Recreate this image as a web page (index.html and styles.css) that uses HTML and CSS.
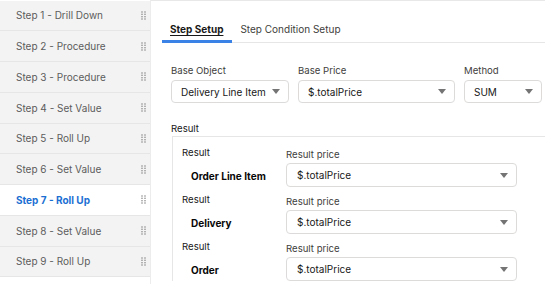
FILE: index.html
```html
<!DOCTYPE html>
<html>
<head>
<meta charset="utf-8">
<link rel="stylesheet" href="styles.css">
</head>
<body>
<div class="app">
  <aside class="sidebar">
    <div class="step"><span>Step 1 - Drill Down</span><svg class="grip" viewBox="0 0 5 9"><circle cx="1" cy="1" r="0.8"/><circle cx="4" cy="1" r="0.8"/><circle cx="1" cy="3.3" r="0.8"/><circle cx="4" cy="3.3" r="0.8"/><circle cx="1" cy="5.7" r="0.8"/><circle cx="4" cy="5.7" r="0.8"/><circle cx="1" cy="8" r="0.8"/><circle cx="4" cy="8" r="0.8"/></svg></div>
    <div class="step"><span>Step 2 - Procedure</span><svg class="grip" viewBox="0 0 5 9"><circle cx="1" cy="1" r="0.8"/><circle cx="4" cy="1" r="0.8"/><circle cx="1" cy="3.3" r="0.8"/><circle cx="4" cy="3.3" r="0.8"/><circle cx="1" cy="5.7" r="0.8"/><circle cx="4" cy="5.7" r="0.8"/><circle cx="1" cy="8" r="0.8"/><circle cx="4" cy="8" r="0.8"/></svg></div>
    <div class="step"><span>Step 3 - Procedure</span><svg class="grip" viewBox="0 0 5 9"><circle cx="1" cy="1" r="0.8"/><circle cx="4" cy="1" r="0.8"/><circle cx="1" cy="3.3" r="0.8"/><circle cx="4" cy="3.3" r="0.8"/><circle cx="1" cy="5.7" r="0.8"/><circle cx="4" cy="5.7" r="0.8"/><circle cx="1" cy="8" r="0.8"/><circle cx="4" cy="8" r="0.8"/></svg></div>
    <div class="step"><span>Step 4 - Set Value</span><svg class="grip" viewBox="0 0 5 9"><circle cx="1" cy="1" r="0.8"/><circle cx="4" cy="1" r="0.8"/><circle cx="1" cy="3.3" r="0.8"/><circle cx="4" cy="3.3" r="0.8"/><circle cx="1" cy="5.7" r="0.8"/><circle cx="4" cy="5.7" r="0.8"/><circle cx="1" cy="8" r="0.8"/><circle cx="4" cy="8" r="0.8"/></svg></div>
    <div class="step"><span>Step 5 - Roll Up</span><svg class="grip" viewBox="0 0 5 9"><circle cx="1" cy="1" r="0.8"/><circle cx="4" cy="1" r="0.8"/><circle cx="1" cy="3.3" r="0.8"/><circle cx="4" cy="3.3" r="0.8"/><circle cx="1" cy="5.7" r="0.8"/><circle cx="4" cy="5.7" r="0.8"/><circle cx="1" cy="8" r="0.8"/><circle cx="4" cy="8" r="0.8"/></svg></div>
    <div class="step"><span>Step 6 - Set Value</span><svg class="grip" viewBox="0 0 5 9"><circle cx="1" cy="1" r="0.8"/><circle cx="4" cy="1" r="0.8"/><circle cx="1" cy="3.3" r="0.8"/><circle cx="4" cy="3.3" r="0.8"/><circle cx="1" cy="5.7" r="0.8"/><circle cx="4" cy="5.7" r="0.8"/><circle cx="1" cy="8" r="0.8"/><circle cx="4" cy="8" r="0.8"/></svg></div>
    <div class="step active"><span>Step 7 - Roll Up</span><svg class="grip" viewBox="0 0 5 9"><circle cx="1" cy="1" r="0.8"/><circle cx="4" cy="1" r="0.8"/><circle cx="1" cy="3.3" r="0.8"/><circle cx="4" cy="3.3" r="0.8"/><circle cx="1" cy="5.7" r="0.8"/><circle cx="4" cy="5.7" r="0.8"/><circle cx="1" cy="8" r="0.8"/><circle cx="4" cy="8" r="0.8"/></svg></div>
    <div class="step"><span>Step 8 - Set Value</span><svg class="grip" viewBox="0 0 5 9"><circle cx="1" cy="1" r="0.8"/><circle cx="4" cy="1" r="0.8"/><circle cx="1" cy="3.3" r="0.8"/><circle cx="4" cy="3.3" r="0.8"/><circle cx="1" cy="5.7" r="0.8"/><circle cx="4" cy="5.7" r="0.8"/><circle cx="1" cy="8" r="0.8"/><circle cx="4" cy="8" r="0.8"/></svg></div>
    <div class="step"><span>Step 9 - Roll Up</span><svg class="grip" viewBox="0 0 5 9"><circle cx="1" cy="1" r="0.8"/><circle cx="4" cy="1" r="0.8"/><circle cx="1" cy="3.3" r="0.8"/><circle cx="4" cy="3.3" r="0.8"/><circle cx="1" cy="5.7" r="0.8"/><circle cx="4" cy="5.7" r="0.8"/><circle cx="1" cy="8" r="0.8"/><circle cx="4" cy="8" r="0.8"/></svg></div>
  </aside>
  <main class="content">
    <nav class="tabs">
      <div class="tab active">Step Setup</div>
      <div class="tab">Step Condition Setup</div>
    </nav>
    <div class="form">
      <div class="fields">
        <div class="field f-object">
          <div class="label">Base Object</div>
          <div class="select"><span>Delivery Line Item</span><i class="caret"></i></div>
        </div>
        <div class="field f-price">
          <div class="label">Base Price</div>
          <div class="select"><span>$.totalPrice</span><i class="caret"></i></div>
        </div>
        <div class="field f-method">
          <div class="label">Method</div>
          <div class="select"><span>SUM</span><i class="caret"></i></div>
        </div>
      </div>
      <div class="section-label">Result</div>
      <div class="result-box">
        <div class="result-row">
          <div class="result-left">
            <div class="label">Result</div>
            <div class="result-name">Order Line Item</div>
          </div>
          <div class="result-right">
            <div class="label">Result price</div>
            <div class="select"><span>$.totalPrice</span><i class="caret"></i></div>
          </div>
        </div>
        <div class="result-row">
          <div class="result-left">
            <div class="label">Result</div>
            <div class="result-name">Delivery</div>
          </div>
          <div class="result-right">
            <div class="label">Result price</div>
            <div class="select"><span>$.totalPrice</span><i class="caret"></i></div>
          </div>
        </div>
        <div class="result-row">
          <div class="result-left">
            <div class="label">Result</div>
            <div class="result-name">Order</div>
          </div>
          <div class="result-right">
            <div class="label">Result price</div>
            <div class="select"><span>$.totalPrice</span><i class="caret"></i></div>
          </div>
        </div>
      </div>
    </div>
  </main>
</div>
</body>
</html>
```

FILE: styles.css
```css
* { box-sizing: border-box; }
html, body {
  margin: 0;
  padding: 0;
  background: #ffffff;
  width: 545px;
  height: 284px;
  overflow: hidden;
}
body {
  font-family: Inter, "Liberation Sans", Arial, sans-serif;
  font-size: 9.6px;
  color: #3e3e3c;
}
.app {
  display: flex;
  height: 284px;
}
.sidebar {
  width: 151px;
  flex: none;
  background: #ffffff;
  border-right: 1px solid #ececec;
  padding-top: 0.5px;
}
.step {
  height: 30.75px;
  display: flex;
  align-items: center;
  justify-content: space-between;
  padding: 0 4px 0 16px;
  background: #f3f3f3;
  border-bottom: 1px solid #e6e6e6;
  color: #5c5c5c;
  font-size: 10px;
}
.step.active {
  background: #ffffff;
  color: #1b6fd3;
  font-weight: 700;
}
.grip {
  width: 5px;
  height: 9px;
  fill: #8a8a8a;
}
.content {
  flex: 1;
  border-top: 1px solid #e8e8e8;
  min-width: 0;
}
.tabs {
  display: flex;
  margin-left: 11px;
  height: 42px;
  border-bottom: 1px solid #e6e6e6;
  align-items: flex-end;
}
.tab {
  padding: 0 9px 4px 8px;
  font-size: 10px;
  line-height: 14px;
  color: #3e3e3c;
  border-bottom: 3px solid transparent;
  margin-bottom: -1px;
}
.tab.active {
  color: #181818;
  font-weight: 700;
  text-decoration: underline;
  text-underline-offset: 2px;
  border-bottom-color: #3b82e6;
}
.form {
  padding: 21px 0 0 20px;
}
.fields {
  display: flex;
  gap: 9px;
}
.f-object { width: 118px; }
.f-price { width: 157px; }
.f-method { width: 78px; }
.label {
  font-size: 9.6px;
  line-height: 14px;
  color: #3e3e3c;
  margin-bottom: 2px;
}
.select {
  height: 23px;
  border: 1px solid #dddbda;
  border-radius: 4px;
  display: flex;
  align-items: center;
  justify-content: space-between;
  padding: 0 8px 0 9px;
  font-size: 10px;
  color: #181818;
  background: #fff;
}
.caret {
  width: 0;
  height: 0;
  border-left: 4.5px solid transparent;
  border-right: 4.5px solid transparent;
  border-top: 5px solid #747474;
}
.section-label {
  margin-top: 19px;
  line-height: 14px;
  font-size: 9.6px;
  color: #181818;
}
.result-box {
  margin-left: 1px;
  border: 1px solid #e6e6e6;
  border-right: none;
  border-bottom: none;
  padding: 9px 0 0 9px;
  display: flex;
  flex-direction: column;
  gap: 6px;
}
.result-row {
  display: flex;
}
.result-left {
  width: 104px;
  flex: none;
}
.result-left .label {
  color: #181818;
  margin-bottom: 0;
}
.result-name {
  margin: 9px 0 0 9px;
  line-height: 14px;
  font-weight: 700;
  font-size: 10px;
  color: #080707;
}
.result-right {
  width: 231px;
  padding-top: 2px;
}
.result-right .label {
  margin-bottom: 1px;
}
.result-right .select {
  height: 24px;
  padding-left: 10px;
  padding-right: 8px;
}
```
